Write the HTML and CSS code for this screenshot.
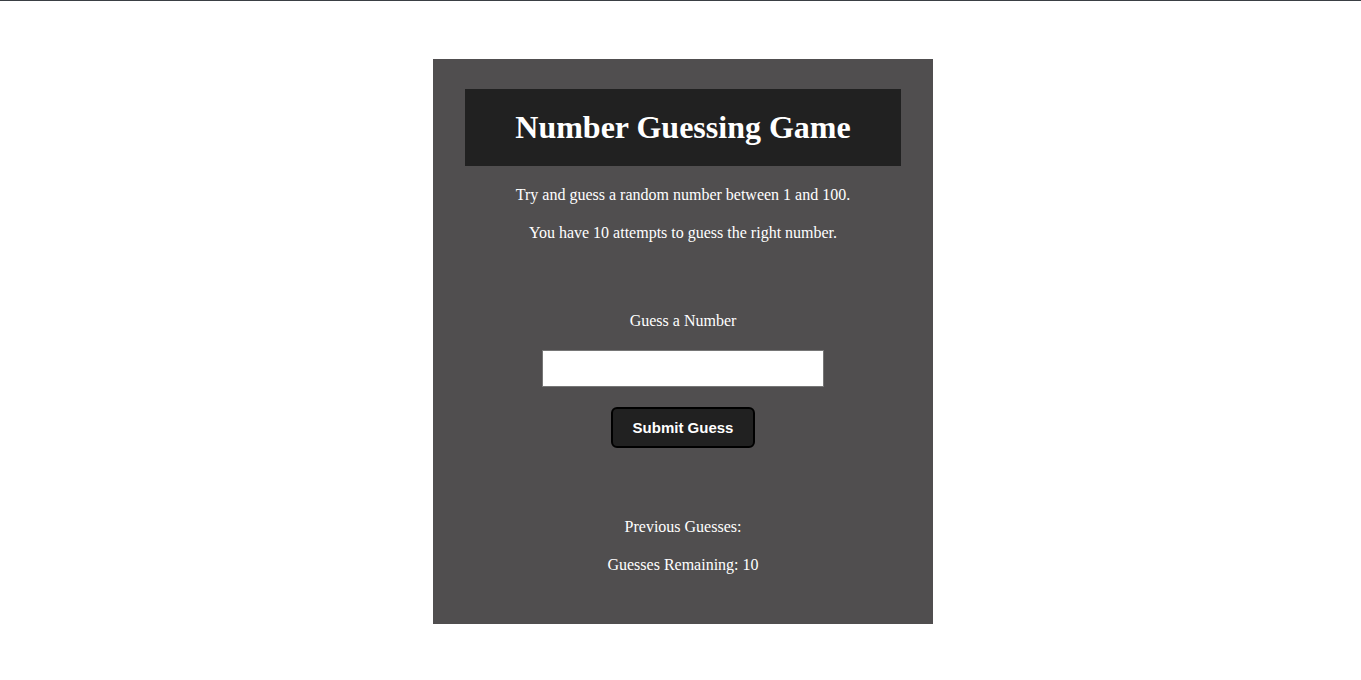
FILE: index.html
```html
<!DOCTYPE html>
<html>
<head>
<meta charset="utf-8">
<link rel="stylesheet" href="styles.css">
</head>
<body>
<div class="page">
  <main class="game">
    <header class="game-header"><h1>Number Guessing Game</h1></header>
    <p class="intro">Try and guess a random number between 1 and 100.</p>
    <p class="intro second">You have 10 attempts to guess the right number.</p>
    <form class="guess-form">
      <label class="guess-label" for="guess">Guess a Number</label>
      <input class="guess-input" id="guess" type="text">
      <button class="guess-btn" type="button">Submit Guess</button>
    </form>
    <div class="results">
      <p class="result">Previous Guesses:</p>
      <p class="result second">Guesses Remaining: 10</p>
    </div>
  </main>
</div>
</body>
</html>
```
FILE: styles.css
```css
html, body {
  margin: 0;
  padding: 0;
  background: #ffffff;
}
body {
  border-top: 1px solid #3a3f44;
  font-family: "Liberation Serif", "Times New Roman", serif;
  color: #ffffff;
}
.page {
  display: flex;
  justify-content: center;
  padding-top: 58px;
  padding-left: 5px;
}
.game {
  width: 500px;
  box-sizing: border-box;
  background: #504e4f;
  padding: 30px 32px 50px;
  display: flex;
  flex-direction: column;
  align-items: center;
}
.game-header {
  align-self: stretch;
  background: #212121;
  height: 77px;
  display: flex;
  align-items: center;
  justify-content: center;
}
.game-header h1 {
  margin: 0;
  font-size: 32px;
  line-height: 37px;
  font-weight: bold;
}
.intro {
  margin: 20px 0 0;
  font-size: 16px;
  line-height: 18px;
}
.intro.second {
  margin-top: 20px;
}
.guess-form {
  display: flex;
  flex-direction: column;
  align-items: center;
  margin-top: 70px;
}
.guess-label {
  font-size: 16px;
  line-height: 18px;
}
.guess-input {
  margin-top: 20px;
  width: 282px;
  height: 37px;
  box-sizing: border-box;
  border: 1px solid #767676;
  background: #ffffff;
  padding: 0 8px;
  outline: none;
}
.guess-btn {
  margin-top: 20px;
  width: 144px;
  height: 41px;
  box-sizing: border-box;
  background: #212121;
  color: #ffffff;
  border: 2px solid #000000;
  border-radius: 6px;
  font-family: "Liberation Sans", Arial, sans-serif;
  font-weight: bold;
  font-size: 15px;
}
.results {
  margin-top: 70px;
  display: flex;
  flex-direction: column;
  align-items: center;
}
.result {
  margin: 0;
  font-size: 16px;
  line-height: 18px;
}
.result.second {
  margin-top: 20px;
}
```
